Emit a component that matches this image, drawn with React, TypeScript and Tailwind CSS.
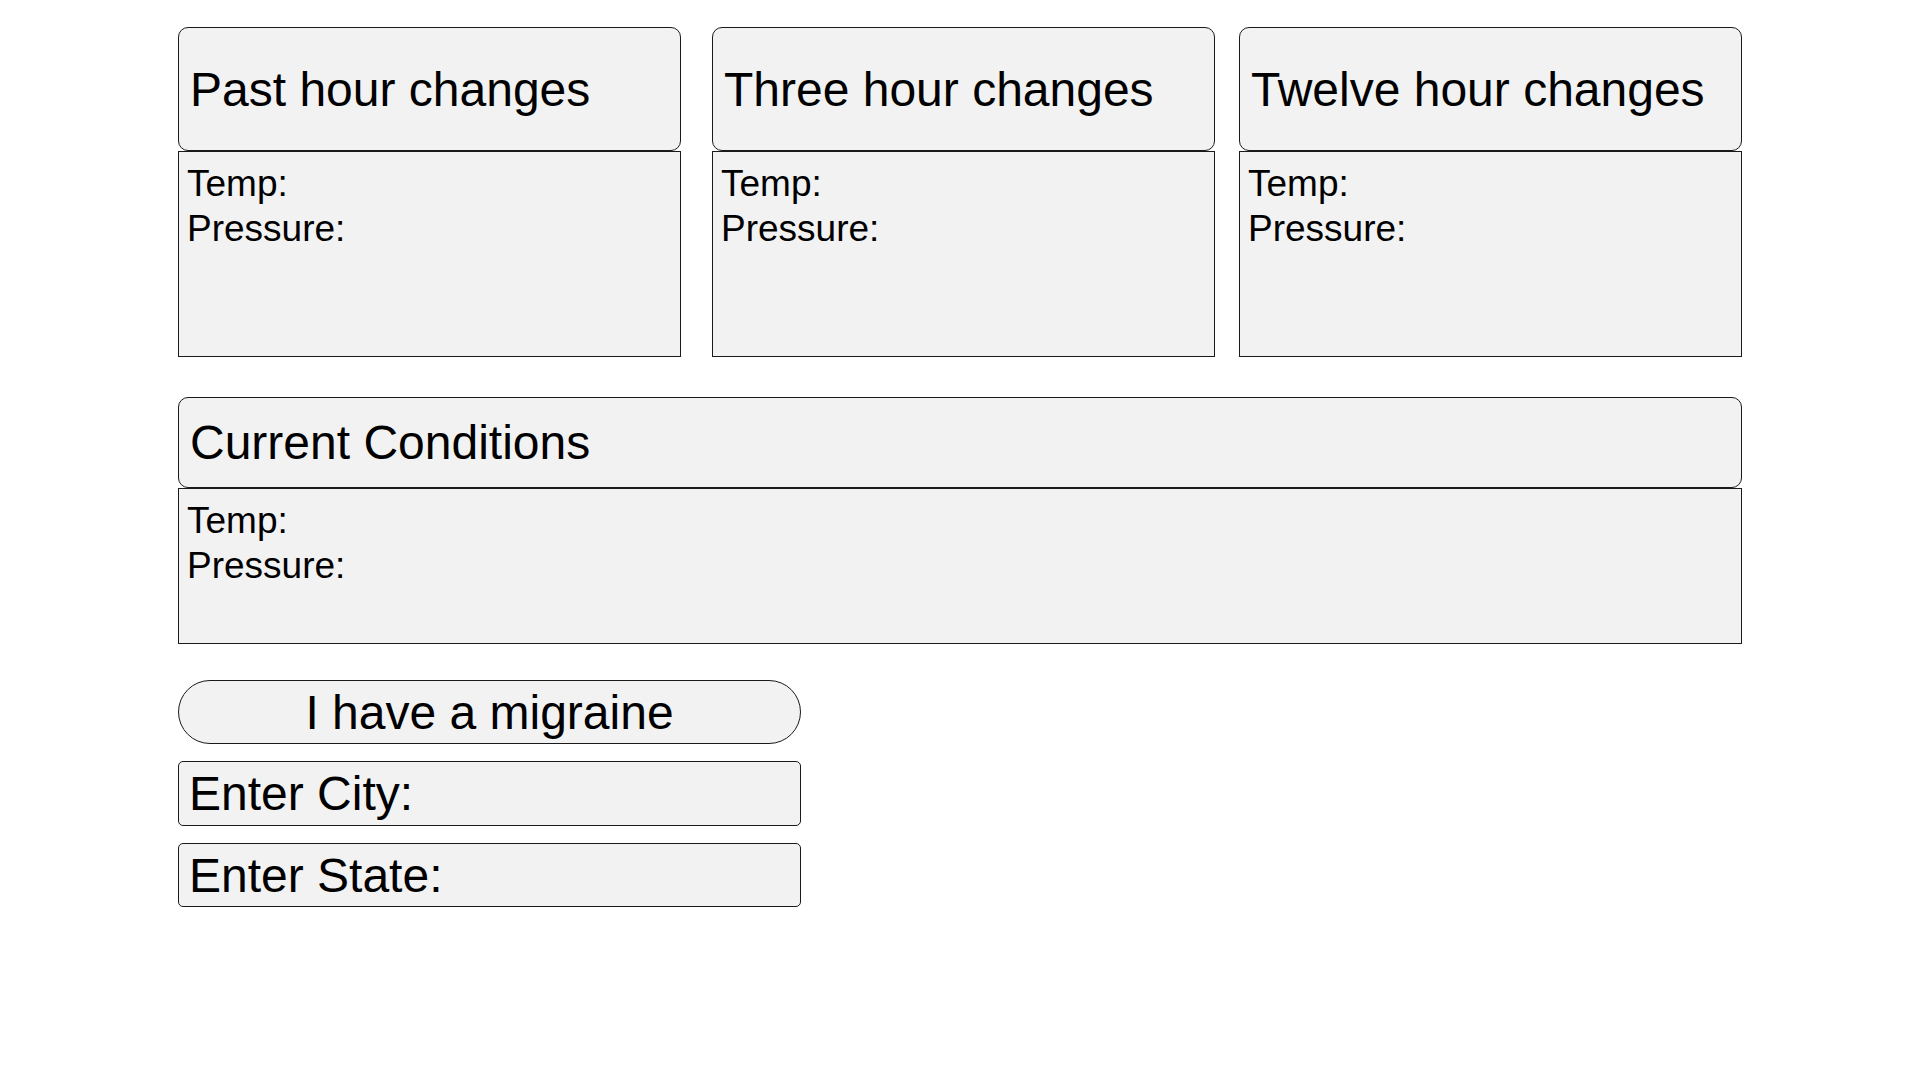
import React from "react";

function ChangeCard({ title, className = "" }: { title: string; className?: string }) {
  return (
    <div className={"flex w-[503px] flex-col " + className}>
      <div className="flex h-[124px] items-center rounded-[10px] border border-[#1a1a1a] bg-[#f2f2f2] pl-[11px] pt-[1px] text-[48px] leading-[55px]">
        {title}
      </div>
      <div className="h-[206px] border border-[#1a1a1a] bg-[#f2f2f2] pl-[8px] pt-[9px] text-[37px] leading-[45px]">
        <div>Temp:</div>
        <div>Pressure:</div>
      </div>
    </div>
  );
}

export default function App() {
  return (
    <div className="min-h-screen bg-white pl-[178px] pt-[27px] font-['Liberation_Sans',Arial,sans-serif] text-black">
      <div className="flex w-[1564px]">
        <ChangeCard title="Past hour changes" />
        <ChangeCard title="Three hour changes" className="ml-[31px]" />
        <ChangeCard title="Twelve hour changes" className="ml-[24px]" />
      </div>

      <div className="mt-[40px] flex w-[1564px] flex-col">
        <div className="flex h-[91px] items-center rounded-[10px] border border-[#1a1a1a] bg-[#f2f2f2] pl-[11px] text-[48px] leading-[55px]">
          Current Conditions
        </div>
        <div className="h-[156px] border border-[#1a1a1a] bg-[#f2f2f2] pl-[8px] pt-[9px] text-[37px] leading-[45px]">
          <div>Temp:</div>
          <div>Pressure:</div>
        </div>
      </div>

      <div className="mt-[36px] flex w-[623px] flex-col">
        <button className="flex h-[64px] items-center justify-center rounded-full border border-[#1a1a1a] bg-[#f2f2f2] text-[48px] leading-[55px]">
          I have a migraine
        </button>
        <div className="mt-[17px] flex h-[65px] items-center rounded-[5px] border border-[#1a1a1a] bg-[#f2f2f2] pl-[10px] text-[48px] leading-[55px]">
          Enter City:
        </div>
        <div className="mt-[17px] flex h-[64px] items-center rounded-[5px] border border-[#1a1a1a] bg-[#f2f2f2] pl-[10px] text-[48px] leading-[55px]">
          Enter State:
        </div>
      </div>
    </div>
  );
}
